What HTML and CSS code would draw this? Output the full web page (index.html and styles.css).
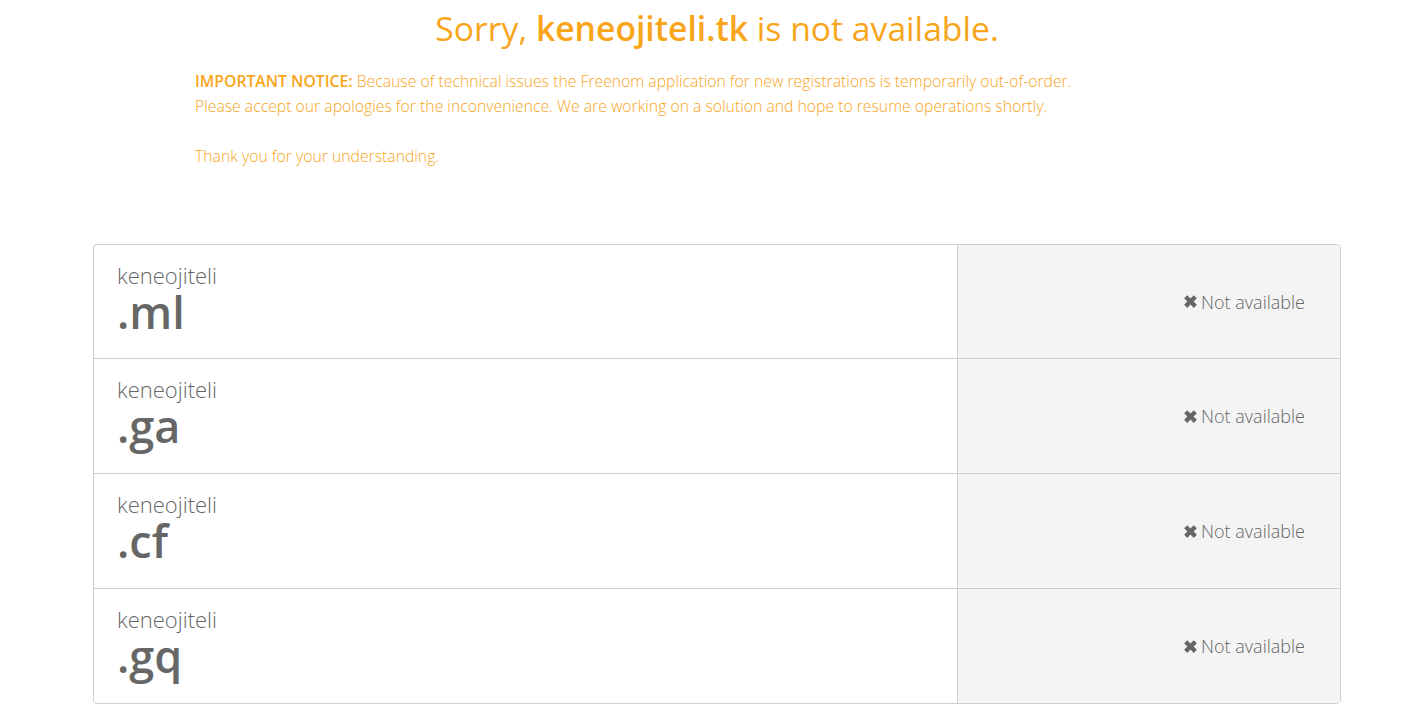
FILE: index.html
```html
<!DOCTYPE html>
<html>
<head>
<meta charset="utf-8">
<link rel="stylesheet" href="styles.css">
</head>
<body>
<div class="wrap">
  <h1 class="title">Sorry, <strong>keneojiteli.tk</strong> is not available.</h1>
  <div class="notice">
    <p><strong>IMPORTANT NOTICE:</strong> Because of technical issues the Freenom application for new registrations is temporarily out-of-order.<br>Please accept our apologies for the inconvenience. We are working on a solution and hope to resume operations shortly.</p>
    <p>Thank you for your understanding.</p>
  </div>
  <div class="domains">
    <div class="row">
      <div class="name"><span class="sld">keneojiteli</span><span class="tld">.ml</span></div>
      <div class="status"><svg class="x" viewBox="0 0 12 12"><path d="M1.5 3.7 3.7 1.5 6 3.8 8.3 1.5 10.5 3.7 8.2 6 10.5 8.3 8.3 10.5 6 8.2 3.7 10.5 1.5 8.3 3.8 6Z"/></svg>Not available</div>
    </div>
    <div class="row">
      <div class="name"><span class="sld">keneojiteli</span><span class="tld">.ga</span></div>
      <div class="status"><svg class="x" viewBox="0 0 12 12"><path d="M1.5 3.7 3.7 1.5 6 3.8 8.3 1.5 10.5 3.7 8.2 6 10.5 8.3 8.3 10.5 6 8.2 3.7 10.5 1.5 8.3 3.8 6Z"/></svg>Not available</div>
    </div>
    <div class="row">
      <div class="name"><span class="sld">keneojiteli</span><span class="tld">.cf</span></div>
      <div class="status"><svg class="x" viewBox="0 0 12 12"><path d="M1.5 3.7 3.7 1.5 6 3.8 8.3 1.5 10.5 3.7 8.2 6 10.5 8.3 8.3 10.5 6 8.2 3.7 10.5 1.5 8.3 3.8 6Z"/></svg>Not available</div>
    </div>
    <div class="row">
      <div class="name"><span class="sld">keneojiteli</span><span class="tld">.gq</span></div>
      <div class="status"><svg class="x" viewBox="0 0 12 12"><path d="M1.5 3.7 3.7 1.5 6 3.8 8.3 1.5 10.5 3.7 8.2 6 10.5 8.3 8.3 10.5 6 8.2 3.7 10.5 1.5 8.3 3.8 6Z"/></svg>Not available</div>
    </div>
  </div>
</div>
</body>
</html>
```
FILE: styles.css
```css
html, body {
  margin: 0;
  padding: 0;
  background: #fff;
}
body {
  font-family: "Open Sans", "Liberation Sans", sans-serif;
}
.wrap {
  width: 1248px;
  margin-left: 93px;
}
.title {
  margin: 0;
  padding-top: 5px;
  text-align: center;
  font-size: 33.7px;
  font-weight: 400;
  line-height: 46px;
  color: #f9a51a;
}
.title strong {
  font-weight: 600;
}
.notice {
  padding-left: 102px;
  margin-top: 18px;
  font-size: 15.75px;
  font-weight: 300;
  line-height: 25px;
  color: #f9a51a;
}
.notice p {
  margin: 0 0 25px 0;
}
.notice strong {
  font-weight: 600;
}
.domains {
  margin-top: 75px;
  border: 1px solid #cfcfcf;
  border-radius: 4px;
  overflow: hidden;
}
.row {
  display: flex;
  height: 114px;
  border-top: 1px solid #cfcfcf;
}
.row:first-child {
  border-top: none;
  height: 113px;
}
.name {
  width: 840px;
  padding: 16px 0 0 23px;
  display: flex;
  flex-direction: column;
  color: #666;
  border-right: 1px solid #cfcfcf;
}
.sld {
  font-size: 22px;
  font-weight: 300;
  line-height: 28px;
}
.tld {
  font-size: 45px;
  font-weight: 600;
  line-height: 46px;
}
.status {
  flex: 1;
  background: #f4f4f4;
  display: flex;
  align-items: center;
  justify-content: flex-end;
  padding-right: 35px;
  font-size: 18px;
  font-weight: 300;
  color: #666;
}
.x {
  width: 17px;
  height: 17px;
  margin-right: 2px;
  fill: #666;
}
```
